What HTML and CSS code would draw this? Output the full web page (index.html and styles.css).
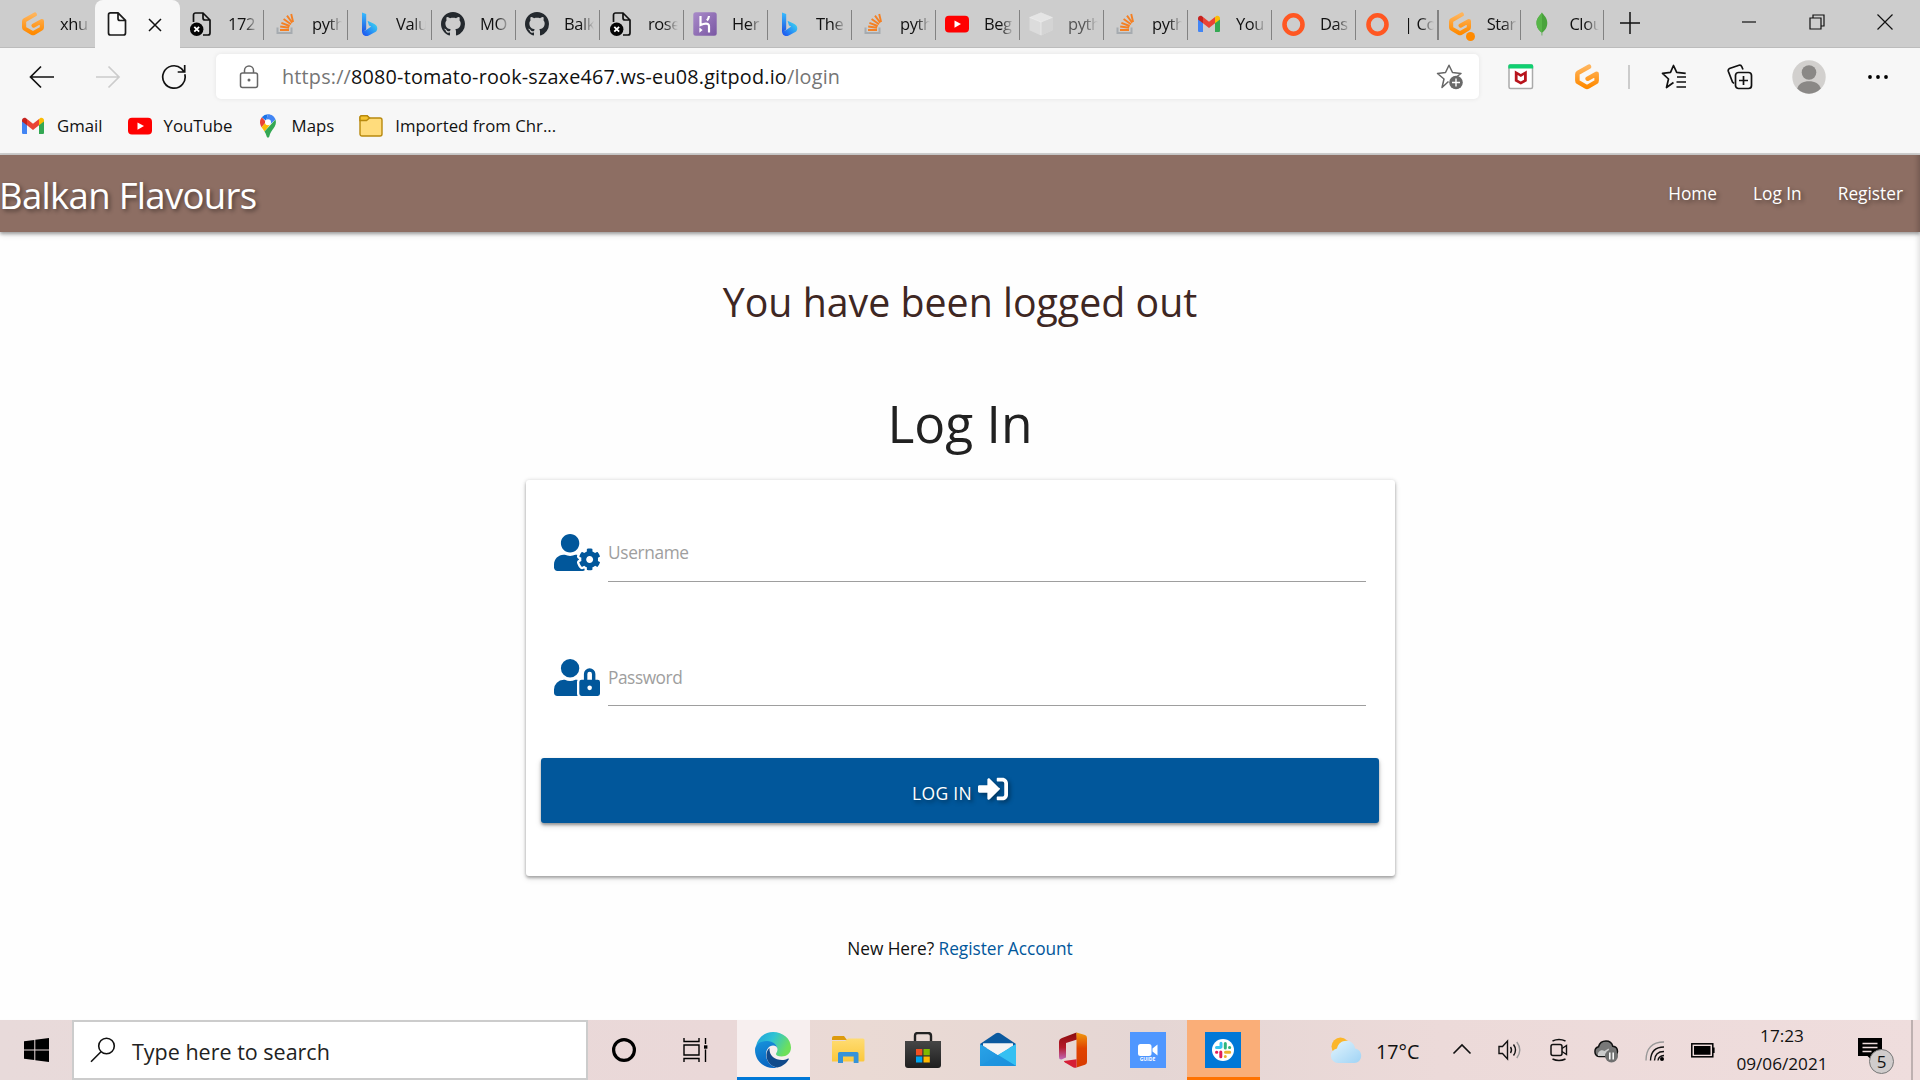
FILE: index.html
```html
<!DOCTYPE html>
<html lang="en">
<head>
<meta charset="utf-8">
<title>Balkan Flavours</title>
<link rel="stylesheet" href="styles.css">
</head>
<body>
<svg class="defs" width="0" height="0" aria-hidden="true">
  <defs>
    <linearGradient id="g-gitpod" x1="0" y1="0" x2="0" y2="1"><stop offset="0" stop-color="#ffb45b"/><stop offset="1" stop-color="#ff8a00"/></linearGradient>
    <linearGradient id="g-bing" x1="0" y1="0" x2="0" y2="1"><stop offset="0" stop-color="#37bdff"/><stop offset="1" stop-color="#2052e0"/></linearGradient>
    <linearGradient id="g-bing2" x1="0" y1="1" x2="1" y2="0"><stop offset="0" stop-color="#1b48ef"/><stop offset=".5" stop-color="#2a9bf5"/><stop offset="1" stop-color="#45e0ee"/></linearGradient>
    <linearGradient id="g-heroku" x1="0" y1="0" x2="1" y2="1"><stop offset="0" stop-color="#a98bc9"/><stop offset="1" stop-color="#7a57a3"/></linearGradient>
    <linearGradient id="g-edge-a" x1="0" y1="0" x2="1" y2=".4"><stop offset="0" stop-color="#1f9fdc"/><stop offset=".5" stop-color="#2fc3d4"/><stop offset="1" stop-color="#6ee05a"/></linearGradient>
    <linearGradient id="g-edge-b" x1="0" y1="0" x2=".3" y2="1"><stop offset="0" stop-color="#1794dc"/><stop offset="1" stop-color="#0a66c2"/></linearGradient>
    <linearGradient id="g-mail" x1="0" y1="0" x2="1" y2="1"><stop offset="0" stop-color="#2aa4e8"/><stop offset="1" stop-color="#1a8cd8"/></linearGradient>
    <linearGradient id="g-office" x1="0" y1="0" x2="0" y2="1"><stop offset="0" stop-color="#8a0d0d"/><stop offset=".55" stop-color="#b51a2a"/><stop offset="1" stop-color="#c06ab8"/></linearGradient>
    <linearGradient id="g-office2" x1="0" y1="0" x2="0" y2="1"><stop offset="0" stop-color="#f09a10"/><stop offset=".45" stop-color="#e04400"/><stop offset="1" stop-color="#d83b01"/></linearGradient>
    <linearGradient id="g-folder" x1="0" y1="0" x2="0" y2="1"><stop offset="0" stop-color="#ffdc73"/><stop offset="1" stop-color="#fbc83c"/></linearGradient>
    <linearGradient id="g-store" x1="0" y1="0" x2="0" y2="1"><stop offset="0" stop-color="#464646"/><stop offset="1" stop-color="#1f1f1f"/></linearGradient>
    <linearGradient id="g-cloud" x1="0" y1="0" x2="1" y2="1"><stop offset="0" stop-color="#e2f4fd"/><stop offset="1" stop-color="#9fd3f5"/></linearGradient>

    <symbol id="gitpod" viewBox="0 0 24 24"><path d="M13.800 2.500 3.900 8.100Q3.100 8.600 3.100 9.500V15.200Q3.100 16.200 3.900 16.700L11 20.900Q12 21.500 13 20.900L20.100 16.700Q20.900 16.200 20.900 15.200V9L12.600 13.600" fill="none" stroke="url(#g-gitpod)" stroke-width="4.200" stroke-linecap="round" stroke-linejoin="round"/></symbol>
    <symbol id="doc" viewBox="0 0 24 24"><path d="M5.500.900H13L20.500 8.400V21a2 2 0 0 1-2 2H5.500a2 2 0 0 1-2-2V2.900a2 2 0 0 1 2-2zM13 1v5.500a2 2 0 0 0 2 2h5.500" fill="#fbfbfb" stroke="#1b1b1b" stroke-width="1.700"/></symbol>
    <symbol id="doc-x" viewBox="0 0 24 24"><path d="M4.500 10V3a2 2 0 0 1 2-2H14l7 7v13a2 2 0 0 1-2 2h-5M14 1v5a2 2 0 0 0 2 2h5" fill="none" stroke="#111" stroke-width="1.700"/><circle cx="7.700" cy="17.200" r="6.700" fill="#050505"/><path d="m5.300 14.800 4.800 4.800m0-4.800-4.800 4.800" stroke="#fff" stroke-width="1.800"/></symbol>
    <symbol id="so" viewBox="0 0 24 24"><path d="M4.500 15.500v5.600h14v-5.600" fill="none" stroke="#a6abb0" stroke-width="2"/><path d="M7 18h9M7.200 14.500l8.900 1.200M8.400 10.800l8.300 3.200M10.600 7l7.400 5.200M14 3.600l5.200 7.200M18.200 2l1.900 8" stroke="#f48024" stroke-width="1.900"/></symbol>
    <symbol id="bing" viewBox="0 0 24 24"><path d="M5 .500 9.200 2v15.500L5 20.500z" fill="url(#g-bing)"/><path d="M5 19.500 9.200 18l5-3.500-2.200-1.100-1.500-4.600 6.500 3c4 2 4.200 6.300 1.300 8.300l-6.500 3.500c-2.300 1.100-6.500.6-6.800-4.100z" fill="url(#g-bing2)"/></symbol>
    <symbol id="github" viewBox="0 0 16 16"><path fill="#24292e" d="M8 0C3.580 0 0 3.580 0 8c0 3.540 2.290 6.530 5.470 7.590.4.070.55-.17.55-.38 0-.19-.01-.82-.01-1.490-2.010.37-2.530-.49-2.690-.94-.09-.23-.48-.94-.82-1.130-.28-.15-.68-.52-.01-.53.63-.01 1.080.58 1.230.82.72 1.210 1.870.87 2.330.66.070-.52.28-.87.51-1.070-1.780-.2-3.640-.89-3.640-3.950 0-.87.31-1.590.82-2.150-.08-.2-.36-1.020.080-2.120 0 0 .67-.21 2.200.82.640-.18 1.320-.27 2-.27s1.360.09 2 .27c1.530-1.040 2.200-.82 2.200-.82.440 1.100.16 1.920.080 2.120.51.56.82 1.270.82 2.150 0 3.070-1.870 3.750-3.650 3.950.29.25.54.73.54 1.480 0 1.070-.01 1.930-.01 2.200 0 .21.15.46.55.38A8.010 8.010 0 0 0 16 8c0-4.420-3.580-8-8-8z"/></symbol>
    <symbol id="heroku" viewBox="0 0 24 24"><rect x=".3" y=".3" width="23.400" height="23.400" rx="2.500" fill="url(#g-heroku)"/><path d="M7.500 4v9c3-1.300 8.500-2.800 8.500 1.200V20.500M16 4c-.2 1.800-1 3.300-2 4.500" fill="none" stroke="#fff" stroke-width="2.200"/><path d="m6.400 15.500 3.200 2.600-3.200 2.600z" fill="#fff"/></symbol>
    <symbol id="youtube" viewBox="0 0 24 24"><rect y="3.700" width="24" height="16.800" rx="4" fill="#f00"/><path d="m9.500 8.500 6.500 3.600-6.500 3.600z" fill="#fff"/></symbol>
    <symbol id="cube" viewBox="0 0 24 24"><path d="m12 .5 11.500 4.800v13L12 23.500.5 18.300v-13z" fill="#dcdcdc"/><path d="m12 .5 11.500 4.800L12 10 .5 5.300z" fill="#e5e5e5"/><path d="M12 10v13.500l11.500-5.200v-13z" fill="#d4d4d4"/><path d="M.5 5.300 12 10l11.500-4.700M12 10v13" fill="none" stroke="#eee" stroke-width=".7"/></symbol>
    <symbol id="gmail" viewBox="0 0 24 24"><path d="M1 6.500v12.300c0 .8.600 1.300 1.300 1.300H6V10z" fill="#4285f4"/><path d="M18 10v10.100h3.700c.8 0 1.300-.6 1.300-1.300V6.500z" fill="#34a853"/><path d="m6 5 6 4.700L18 5v6.200L12 16l-6-4.800z" fill="#ea4335"/><path d="M1 6.500C1 4 3.500 3.200 5 4.200l1 .8v6.200L1 7.600z" fill="#c5221f"/><path d="M18 5l1-.8c1.600-1 4-.2 4 2.300v1.100l-5 3.600z" fill="#fbbc04"/></symbol>
    <symbol id="ring" viewBox="0 0 24 24"><ellipse cx="12.500" cy="12.500" rx="9" ry="9.200" fill="none" stroke="#ff5722" stroke-width="4.600"/></symbol>
    <symbol id="leaf" viewBox="0 0 24 24"><path d="M12 .5c1.300 2.300 5.300 5 5.300 10.500 0 4.500-2.300 7.500-5 9.500v3h-.7v-3C9 18.500 6.500 15.500 6.500 11 6.500 5.500 10.700 3 12 .500z" fill="#49a33c"/><path d="M12 .5v20c-3-2-5.500-5-5.500-9.500C6.500 5.500 10.700 3 12 .500z" fill="#57b548"/></symbol>
  </defs>
</svg>

<div class="browser">
  <header class="tabs">
    <div class="tab tab-first"><svg class="fav"><use href="#gitpod"/></svg><span class="tab-name">xhu</span></div>
    <div class="tab tab-active"><svg class="fav"><use href="#doc"/></svg><svg class="tab-close" viewBox="0 0 14 14"><path d="m1 1 12 12M13 1 1 13" stroke="#111" stroke-width="1.500"/></svg></div>
    <div class="tab"><svg class="fav"><use href="#doc-x"/></svg><span class="tab-name">172</span></div>
    <div class="tab"><svg class="fav"><use href="#so"/></svg><span class="tab-name">pyth</span></div>
    <div class="tab"><svg class="fav"><use href="#bing"/></svg><span class="tab-name">Valu</span></div>
    <div class="tab"><svg class="fav"><use href="#github"/></svg><span class="tab-name">MO</span></div>
    <div class="tab"><svg class="fav"><use href="#github"/></svg><span class="tab-name">Balk</span></div>
    <div class="tab"><svg class="fav"><use href="#doc-x"/></svg><span class="tab-name">rose</span></div>
    <div class="tab"><svg class="fav"><use href="#heroku"/></svg><span class="tab-name">Her</span></div>
    <div class="tab"><svg class="fav"><use href="#bing"/></svg><span class="tab-name">The</span></div>
    <div class="tab"><svg class="fav"><use href="#so"/></svg><span class="tab-name">pyth</span></div>
    <div class="tab"><svg class="fav"><use href="#youtube"/></svg><span class="tab-name">Beg</span></div>
    <div class="tab tab-sleeping"><svg class="fav"><use href="#cube"/></svg><span class="tab-name">pyth</span></div>
    <div class="tab"><svg class="fav"><use href="#so"/></svg><span class="tab-name">pyth</span></div>
    <div class="tab"><svg class="fav"><use href="#gmail"/></svg><span class="tab-name">You</span></div>
    <div class="tab"><svg class="fav"><use href="#ring"/></svg><span class="tab-name">Das</span></div>
    <div class="tab tab-narrow"><svg class="fav"><use href="#ring"/></svg><span class="tab-name">| Co</span></div>
    <div class="tab tab-narrow tab-notify"><svg class="fav"><use href="#gitpod"/></svg><i class="dot"></i><span class="tab-name">Star</span></div>
    <div class="tab tab-narrow"><svg class="fav"><use href="#leaf"/></svg><span class="tab-name">Clou</span></div>
    <svg class="new-tab" viewBox="0 0 22 24"><path d="M1 12h20M11 1v22" stroke="#111" stroke-width="1.500"/></svg>
    <div class="win-controls">
      <svg width="16" height="16" viewBox="0 0 16 16"><path d="M1 8h14" stroke="#111" stroke-width="1.200"/></svg>
      <svg width="16" height="16" viewBox="0 0 16 16"><path d="M1 4h11v11H1zM4 4V1h11v11h-3" fill="none" stroke="#111" stroke-width="1.200"/></svg>
      <svg width="16" height="16" viewBox="0 0 16 16"><path d="m.5.500 15 15m0-15-15 15" stroke="#111" stroke-width="1.200"/></svg>
    </div>
  </header>

  <div class="toolbar">
    <div class="nav-buttons">
      <svg width="26" height="24" viewBox="0 0 26 24"><path d="M12 1.500 1.500 12 12 22.500M1.500 12H25" fill="none" stroke="#111" stroke-width="1.700"/></svg>
      <svg width="26" height="24" viewBox="0 0 26 24"><path d="M13.500 1.500 24 12 13.500 22.500M24 12H1" fill="none" stroke="#ccc" stroke-width="1.700"/></svg>
      <svg width="26" height="26" viewBox="0 0 26 26"><path d="M23.800 10.200A11.200 11.200 0 1 1 20.500 4.700L23 7.700M23.700 1v7h-7" fill="none" stroke="#111" stroke-width="1.700"/></svg>
    </div>
    <div class="address">
      <svg class="lock" width="20" height="24" viewBox="0 0 20 24"><rect x="1.500" y="8" width="17" height="14.500" rx="2" fill="none" stroke="#666" stroke-width="1.500"/><path d="M5.500 8V5.500a4.500 4.500 0 0 1 9 0V8" fill="none" stroke="#666" stroke-width="1.500"/><circle cx="10" cy="15" r="1.500" fill="#666"/></svg>
      <span class="url"><span>https://</span><b>8080-tomato-rook-szaxe467.ws-eu08.gitpod.io</b><span>/login</span></span>
      <svg class="fav-add" width="28" height="26" viewBox="0 0 28 26"><path d="M12.500 17.500 6 23.500 8 15 1.500 9.500l8-1L13 1.200l3.500 7.300 8.500 1-4 3" fill="none" stroke="#666" stroke-width="1.500" stroke-linejoin="round"/><circle cx="20" cy="18.500" r="6.800" fill="#696969"/><path d="M16 18.500h8m-4-4v8" stroke="#fff" stroke-width="1.400"/></svg>
    </div>
    <div class="actions">
      <svg width="26" height="26" viewBox="0 0 26 26"><rect x="1" y="1" width="23.500" height="23.500" rx="1.500" fill="#fff" stroke="#aaa" stroke-width="1.500"/><path d="M.3 4.500V2Q.3.300 2 .300h21.500Q25.200.300 25.200 2v2.500z" fill="#10d070"/><path d="m6.800 6.500 6 3.600 6-3.600v10.800l-6 3.200-6-3.200zm2.800 4.600v4.600l3.200 1.700 3.200-1.700v-4.600l-3.200 2z" fill="#b8141c" fill-rule="evenodd"/></svg>
      <svg width="26" height="26"><use href="#gitpod"/></svg>
      <i class="rule"></i>
      <svg width="26" height="26" viewBox="0 0 26 26"><path d="M12.500 18.500 5.500 23.500 7.500 15 1.500 9.300l8-1L12.500 1.500l3.200 6.800 9 1M16 13h9M15.500 18H25M15.500 23H25" fill="none" stroke="#111" stroke-width="1.700" stroke-linejoin="round"/></svg>
      <svg width="26" height="26" viewBox="0 0 26 26"><rect x="8.500" y="8.500" width="16" height="16" rx="3" fill="none" stroke="#111" stroke-width="1.700"/><path d="M16.500 12v9m-4.500-4.500h9M7 19.500 5.500 18 1.300 7.200Q.8 5.500 2.500 4.500L12 1.300q2-.5 2.700 1.200L16 5.500" fill="none" stroke="#111" stroke-width="1.700"/></svg>
      <svg width="34" height="34" viewBox="0 0 34 34"><circle cx="17" cy="17" r="16.700" fill="#d2d0ce"/><circle cx="17" cy="12.500" r="7.300" fill="#8a8886"/><path d="M5.200 28.500C7 23.500 11 21.300 17 21.300s10 2.200 11.800 7.200A16.600 16.600 0 0 1 17 33.700a16.600 16.600 0 0 1-11.800-5.200z" fill="#8a8886"/></svg>
      <svg width="22" height="6" viewBox="0 0 22 6"><circle cx="3" cy="3" r="1.900"/><circle cx="11" cy="3" r="1.900"/><circle cx="19" cy="3" r="1.900"/></svg>
    </div>
  </div>

  <nav class="bookmarks">
    <span class="bookmark"><svg><use href="#gmail"/></svg>Gmail</span>
    <span class="bookmark"><svg><use href="#youtube"/></svg>YouTube</span>
    <span class="bookmark"><svg viewBox="0 0 24 24"><path d="M12 .3a8 8 0 0 0-6.200 2.900L10 6.700z" fill="#1a73e8"/><path d="M5.800 3.200A8 8 0 0 0 4 8.300c0 1.900.7 3.400 1.600 5L10 8z" fill="#ea4335"/><path d="M12 .3c3.500 0 6.500 2.200 7.500 5.300L14.500 10 10 6.500z" fill="#4285f4"/><path d="M5.600 13.300c.9 1.500 2 2.700 2.900 4.200l6-7.500L10 8z" fill="#fbbc04"/><path d="M19.500 5.600c1.300 4.500-.7 7.300-3 10.200-1.800 2.300-2.500 4-3.100 6.500-.4 1.800-2.400 1.800-2.800 0-.5-1.900-1.100-3.400-2.100-4.800z" fill="#34a853"/><circle cx="12" cy="8.200" r="3" fill="#fff"/></svg>Maps</span>
    <span class="bookmark"><svg viewBox="0 0 24 24"><path d="M1 3.500A1.800 1.800 0 0 1 2.800 1.700H8L10.500 4H21a2 2 0 0 1 2 2v14a2 2 0 0 1-2 2H3a2 2 0 0 1-2-2z" fill="#ffdc7c" stroke="#b8890e" stroke-width="1.400"/><path d="M1 6.500h6.500L10.500 4 8 1.700H2.800A1.800 1.800 0 0 0 1 3.500z" fill="#f5c431" stroke="#b8890e" stroke-width="1.400"/></svg>Imported from Chr...</span>
  </nav>
</div>

<div class="page">
  <nav class="site-nav">
    <a class="brand">Balkan Flavours</a>
    <div class="site-links"><a>Home</a><a>Log In</a><a>Register</a></div>
  </nav>
  <main>
    <h4 class="flash">You have been logged out</h4>
    <h3 class="title">Log In</h3>
    <form class="card">
      <div class="field">
        <svg viewBox="0 0 640 512"><path d="M610.500 373.300c2.600-14.100 2.600-28.500 0-42.600l25.800-14.900c3-1.700 4.300-5.200 3.300-8.500-6.700-21.600-18.200-41.200-33.200-57.400-2.300-2.500-6-3.100-9-1.400l-25.800 14.900c-10.900-9.300-23.400-16.500-36.900-21.300v-29.800c0-3.400-2.400-6.400-5.700-7.100-22.300-5-45-4.800-66.200 0-3.300.7-5.700 3.700-5.700 7.100v29.800c-13.500 4.800-26 12-36.900 21.300l-25.800-14.900c-2.900-1.700-6.700-1.100-9 1.400-15 16.200-26.500 35.800-33.200 57.400-1 3.300.4 6.800 3.300 8.500l25.800 14.900c-2.600 14.100-2.600 28.500 0 42.600l-25.800 14.900c-3 1.700-4.300 5.200-3.300 8.500 6.700 21.600 18.200 41.100 33.200 57.400 2.300 2.500 6 3.100 9 1.400l25.800-14.900c10.900 9.300 23.400 16.500 36.900 21.300v29.800c0 3.400 2.400 6.400 5.700 7.100 22.300 5 45 4.800 66.200 0 3.300-.7 5.700-3.700 5.700-7.100v-29.800c13.500-4.800 26-12 36.900-21.300l25.800 14.900c2.900 1.700 6.700 1.100 9-1.400 15-16.200 26.500-35.800 33.200-57.400 1-3.300-.4-6.800-3.300-8.500l-25.800-14.900zM496 400.500c-26.800 0-48.500-21.800-48.500-48.500s21.800-48.500 48.500-48.500 48.500 21.800 48.500 48.500-21.700 48.500-48.500 48.500zM224 256c70.700 0 128-57.300 128-128S294.700 0 224 0 96 57.300 96 128s57.300 128 128 128zm201.200 226.500c-2.300-1.200-4.600-2.600-6.800-3.900l-7.900 4.600c-6 3.400-12.800 5.300-19.600 5.300-10.900 0-21.400-4.600-28.900-12.600-18.300-19.800-32.300-43.900-40.200-69.600-5.500-17.700 1.900-36.400 17.900-45.700l7.900-4.600c-.1-2.600-.1-5.200 0-7.800l-7.900-4.600c-16-9.200-23.400-28-17.900-45.700.9-2.900 2.200-5.800 3.200-8.700-3.800-.3-7.500-1.200-11.400-1.200h-16.700c-22.200 10.200-46.900 16-72.900 16s-50.600-5.800-72.900-16h-16.700C60.200 288 0 348.200 0 422.400V464c0 26.500 21.500 48 48 48h352c10.100 0 19.500-3.200 27.200-8.500-1.200-3.800-2-7.700-2-11.800v-9.200z"/></svg>
        <label>Username</label>
      </div>
      <div class="field">
        <svg class="icon-password" viewBox="0 0 640 512"><path d="M224 256A128 128 0 1 0 96 128a128 128 0 0 0 128 128zm96 64a63.080 63.080 0 0 1 8.100-30.500c-4.800-.5-9.500-1.500-14.500-1.500h-16.700a174.080 174.080 0 0 1-145.800 0h-16.700A134.430 134.430 0 0 0 0 422.400V464a48 48 0 0 0 48 48h280.900a63.540 63.540 0 0 1-8.900-32zm288-32h-32v-80a80 80 0 0 0-160 0v80h-32a32 32 0 0 0-32 32v160a32 32 0 0 0 32 32h224a32 32 0 0 0 32-32V320a32 32 0 0 0-32-32zM496 432a32 32 0 1 1 32-32 32 32 0 0 1-32 32zm32-144h-64v-80a32 32 0 0 1 64 0z"/></svg>
        <label class="label-password">Password</label>
      </div>
      <button class="submit" type="button"><span>LOG IN</span><svg viewBox="0 0 512 512"><path d="M416 448h-84c-6.600 0-12-5.400-12-12v-40c0-6.600 5.400-12 12-12h84c17.700 0 32-14.300 32-32V160c0-17.700-14.300-32-32-32h-84c-6.600 0-12-5.400-12-12V76c0-6.600 5.400-12 12-12h84c53 0 96 43 96 96v192c0 53-43 96-96 96zm-47-201L201 79c-15-15-41-4.500-41 17v96H24c-13.300 0-24 10.700-24 24v80c0 13.300 10.700 24 24 24h136v96c0 21.500 26 32 41 17l168-168c9.300-9.400 9.300-24.600 0-34z"/></svg></button>
    </form>
    <p class="register">New Here? <a>Register Account</a></p>
  </main>
</div>

<footer class="taskbar">
  <div class="start"><svg width="25" height="24" viewBox="0 0 25 24"><path d="M0 3.300 10.300 1.900v9.600H0zM11.300 1.700 25 0v11.500H11.300zM0 12.500h10.300v9.600L0 20.700zM11.300 12.500H25V24l-13.700-1.700z"/></svg></div>
  <div class="search"><svg width="26" height="26" viewBox="0 0 26 26"><circle cx="16.500" cy="9" r="7.800" fill="none" stroke="#111" stroke-width="1.600"/><path d="M11 14.800 1 24.800" stroke="#111" stroke-width="1.600"/></svg><span>Type here to search</span></div>
  <div class="cell cell-cortana"><svg width="26" height="26" viewBox="0 0 26 26"><circle cx="13" cy="13" r="10.400" fill="none" stroke="#000" stroke-width="3.200"/></svg></div>
  <div class="cell cell-view"><svg width="26" height="24" viewBox="0 0 26 24"><path d="M1 0v3.500h15V0M1 7h15v10H1zM1 24v-3.500h15V24M22.500 0v6M22.500 11.500V24" fill="none" stroke="#000" stroke-width="1.400"/><path d="M21 7.300h3.400v3.400H21z"/></svg></div>
  <div class="cell cell-active"><svg width="36" height="36" viewBox="0 0 36 36"><path d="M1 14C3 5.500 10 0 18 0c10 0 18 7 18 15.500 0 6-4.500 9-9.500 9-3.500 0-5.500-1.200-5.500-2.500 0-1 1.500-2 1.500-4.500 0-4.500-4.500-7.500-9.500-7.500-6 0-10 2-12 4z" fill="url(#g-edge-a)"/><path d="M0 18C0 12 5.500 9 12 9c6 0 10.500 4 10.500 8.500 0-2.500-2-4-4.500-4-4 0-7 4-7 9 0 6 4.500 12 11 13-1.500.4-2.500.5-4 .5C8 36 0 28 0 18z" fill="url(#g-edge-b)"/><path d="M14.500 16c-1.800 1.600-3.100 4-3.100 7 0 6.500 5 12 11 12.500 5-1 9-4.200 11.400-8.300.3-.6-.3-1-.8-.7-2 1.100-4 1.500-6 1.500-7 0-13-4-12.500-12z" fill="#114a8b"/></svg></div>
  <div class="cell"><svg width="34" height="28" viewBox="0 0 34 28"><path d="M1 2Q1 0 3 0h10l3 4H1z" fill="#dd9a0c"/><path d="M1 5h13l3-2.500h15q1.500 0 1.500 1.500v20q0 1.500-1.500 1.500H1z" fill="url(#g-folder)"/><path d="M7 27V17.500q0-1.500 1.500-1.500H26q1.500 0 1.500 1.500V27h-4.800v-6.500H12V27z" fill="#3693d8"/></svg></div>
  <div class="cell"><svg width="36" height="36" viewBox="0 0 36 36"><path d="M10 10V4q0-3 3-3h10q3 0 3 3v6" fill="none" stroke="#222" stroke-width="2.400"/><path d="M0 9h36v24q0 3-3 3H3q-3 0-3-3z" fill="url(#g-store)"/><path d="M11 17h6.300v6.300H11z" fill="#f25022"/><path d="M18.500 17h6.300v6.300h-6.300z" fill="#7fba00"/><path d="M11 24.500h6.300v6H11z" fill="#00a4ef"/><path d="M18.500 24.500h6.300v6h-6.300z" fill="#ffb900"/></svg></div>
  <div class="cell"><svg width="36" height="36" viewBox="0 0 36 36"><path d="M0 12 16 1.300q2-1.300 4 0L36 12v4H0z" fill="#0b5a9f"/><path d="M3 11.500h30L18 25z" fill="#f4f4f4"/><path d="M0 12l18 11L36 12v22H0z" fill="url(#g-mail)"/><path d="M3 11.500h30v2.200L18 23 3 13.700z" fill="#f4f4f4"/><path d="M18 23 36 12v22z" fill="#35c0f2"/><path d="m18 23 18 11H0z" fill="#1d94de" opacity=".65"/></svg></div>
  <div class="cell"><svg width="30" height="36" viewBox="0 0 30 36"><path d="M18.500.500 4 6Q1 7.200 1 10v15q0 3 2.600 2.500L8 25.500V11l11-3.500z" fill="url(#g-office)"/><path d="M18.500.500 27 3q2 .6 2 3v24q0 2-2 2.700L18.500 35.500z" fill="url(#g-office2)"/><path d="m6 29 12.500-1.800v8.300q-1 .4-3 0L7 30.500q-1.200-.8-1-1.500z" fill="#d51f37"/></svg></div>
  <div class="cell"><div class="zoom-tile"><svg width="20" height="12" viewBox="0 0 20 12"><rect width="13.500" height="12" rx="2.500" fill="#fff"/><path d="m14.500 4.500 5-4v11l-5-4z" fill="#fff"/></svg><span>GUIDE</span></div></div>
  <div class="cell cell-slack"><svg width="36" height="36" viewBox="0 0 36 36"><path d="M0 0h36v36H0z" fill="#0078d7"/><circle cx="18" cy="18" r="11" fill="#fff"/><g stroke-width="3" stroke-linecap="round"><path d="M16 11.300V15M11.500 15.500H15" stroke="#36c5f0"/><path d="M20.300 11.500V16M24.700 15.500h-.2" stroke="#2eb67d"/><path d="M20.500 20.300h4.200M20.300 24.600v-.2" stroke="#ecb22e"/><path d="M15.800 20v4.700M11.500 20.300h.3" stroke="#e01e5a"/></g></svg></div>
  <div class="tray">
    <svg class="t-weather" width="32" height="28" viewBox="0 0 32 28"><circle cx="10.500" cy="10.500" r="9" fill="#fbb62a"/><path d="M8 27a7.300 7.300 0 0 1-1-14.500C8 7.500 12 4.800 16.500 4.800c4.500 0 8 3.200 8.500 7.700 3.500.4 6.200 3.300 6.200 7 0 4.500-3 7.500-7 7.500z" fill="url(#g-cloud)"/></svg>
    <span class="temp">17°C</span>
    <svg class="t-chev" width="20" height="12" viewBox="0 0 20 12"><path d="m1.500 10.500 8.500-8.500 8.500 8.500" fill="none" stroke="#111" stroke-width="1.600"/></svg>
    <svg class="t-vol" width="24" height="22" viewBox="0 0 24 22"><path d="M1 7.500h3.500L9.500 2v18l-5-5.500H1zM12.500 8q2 3 0 6M15.500 5.500q4 5.500 0 11" fill="none" stroke="#111" stroke-width="1.400"/><path d="M18.800 3q6 8 0 16" fill="none" stroke="#999" stroke-width="1.400"/></svg>
    <svg class="t-meet" width="18" height="24" viewBox="0 0 18 24"><rect x="1" y="6.500" width="11" height="11" rx="2" fill="none" stroke="#111" stroke-width="1.500"/><path d="M12 10.500 16.500 7.500v9L12 13.500M2.500 3q6.500-3 13 0M2.500 21q6.500 3 13 0" fill="none" stroke="#111" stroke-width="1.400"/></svg>
    <svg class="t-cloud" width="26" height="23" viewBox="0 0 26 23"><path d="M6 16.500a5 5 0 0 1-.5-9.700C6.500 3 9.500 1 13 1c3.500 0 6 2.200 6.800 5.200 3 .3 4.700 2.500 4.700 5.300 0 3-2.500 5-5.500 5z" fill="#787878" stroke="#111" stroke-width="1.500"/><path d="M5 16c-1-4 3-7 6.500-5l4-2.500L19 16z" fill="#ccc"/><circle cx="18.500" cy="16" r="6.500" fill="#707070"/><path d="M16.800 12.500v7m3.400-7v7" stroke="#fff" stroke-width="1.500"/></svg>
    <svg class="t-wifi" width="20" height="22" viewBox="0 0 20 22"><path d="M1 20.500Q1 2 19 2" fill="none" stroke="#999" stroke-width="1.400"/><path d="M5.500 20.500Q6 7 19 7M9.500 20.500Q10 11.500 19 11.500M13 20.500Q13.500 16 19 15.500" fill="none" stroke="#111" stroke-width="1.400"/><circle cx="17" cy="19" r="2"/></svg>
    <svg class="t-bat" width="24" height="15" viewBox="0 0 24 15"><rect x=".8" y=".8" width="21" height="13" fill="none" stroke="#000" stroke-width="1.500"/><path d="M3 3h16.500v8.700H3zM22 4.500h1.600v5.500H22z"/></svg>
    <div class="clock"><span>17:23</span><span>09/06/2021</span></div>
    <div class="notify"><svg width="24" height="24" viewBox="0 0 24 24"><path d="M0 0h24v18h-9v5.500L9.500 18H0z"/><path d="M4.500 5.500h15M4.500 9.500h15M4.500 13.500h9" stroke="#eddcdc" stroke-width="1.400"/></svg><span class="badge">5</span></div>
    <i class="peek"></i>
  </div>
</footer>
</body>
</html>
```
FILE: styles.css
```css
* { box-sizing: border-box; }

body {
  margin: 0;
  width: 1920px;
  height: 1080px;
  overflow: hidden;
  display: flex;
  flex-direction: column;
  background: #fefefe;
  color: #111;
  font-family: "Open Sans", "Noto Sans", sans-serif;
}

svg { display: block; flex: none; }
.defs { position: absolute; }

/* Browser window */
.browser {
  height: 155px;
  background: #f7f7f7;
  border-bottom: 2px solid #cdcdcd;
}

.tabs {
  display: flex;
  height: 48px;
  background: #cdcdcd;
  box-shadow: inset 0 -1px 0 #bcbcbc;
}

.tab {
  position: relative;
  display: flex;
  align-items: center;
  width: 84px;
  padding-left: 9px;
  flex: none;
}

.tab::after {
  content: "";
  position: absolute;
  right: 0;
  top: 10px;
  width: 1.500px;
  height: 30px;
  background: #828282;
}

.tab-first::after, .tab-active::after { display: none; }
.tab-first { width: 95px; padding-left: 21px; }

.tab-active {
  width: 85px;
  padding-left: 10px;
  background: #f7f7f7;
  border-radius: 8px 8px 0 0;
}

.tab-narrow { width: 82.700px; }
.fav { width: 24px; height: 24px; }

.tab-name {
  width: 30px;
  margin-left: 15px;
  overflow: hidden;
  white-space: nowrap;
  font-size: 16.500px;
  letter-spacing: -.4px;
  line-height: 24px;
  -webkit-mask-image: linear-gradient(90deg, #000 55%, transparent);
  mask-image: linear-gradient(90deg, #000 55%, transparent);
}

.tab-sleeping .tab-name { color: #555; }
.tab-close { width: 14px; height: 14px; margin-left: 19px; margin-top: 2px; }

.dot {
  position: absolute;
  left: 27px;
  top: 32px;
  width: 9px;
  height: 9px;
  border-radius: 50%;
  background: #ff8a00;
}

.new-tab { width: 22px; height: 24px; margin: 11px 0 0 15px; }

.win-controls {
  display: flex;
  gap: 52px;
  margin: 14px 27px 0 auto;
}

.toolbar { display: flex; height: 57px; align-items: center; }

.nav-buttons {
  display: flex;
  align-items: center;
  gap: 40px;
  width: 216px;
  padding-left: 29px;
}

.address {
  display: flex;
  align-items: center;
  width: 1263px;
  height: 45px;
  padding: 0 15px 0 23px;
  background: #fff;
  border-radius: 5px;
  box-shadow: 0 0 5px rgba(0, 0, 0, .08);
}

.url {
  margin-left: 23px;
  color: #757575;
  font-size: 19.800px;
  letter-spacing: .2px;
}

.url b { font-weight: 400; color: #111; }
.fav-add { margin-left: auto; }

.actions {
  display: flex;
  align-items: center;
  flex: 1;
  padding-left: 29px;
}

.actions > :nth-child(2) { margin-left: 40px; }
.actions > :nth-child(4) { margin-left: 31px; }
.actions > :nth-child(5) { margin-left: 40px; }
.actions > :nth-child(6) { margin-left: 39px; }
.actions > :nth-child(7) { margin-left: 41px; }
.rule { width: 2px; height: 24px; margin-left: 28px; background: #ccc; }

.bookmarks {
  display: flex;
  gap: 25px;
  height: 41px;
  padding-left: 21px;
  align-items: center;
}

.bookmark { display: flex; align-items: center; font-size: 16.800px; gap: 12px; line-height: 24px; }
.bookmark svg { width: 24px; height: 24px; }
.bookmark:nth-child(3) { margin-left: -2px; }

/* Web page */
.page {
  flex: 1;
  box-shadow: inset -6px 0 5px -4px rgba(0, 0, 0, .12);
}

.site-nav {
  display: flex;
  justify-content: space-between;
  height: 77px;
  padding-right: 17px;
  background: #8d6e63;
  color: #fff;
  box-shadow: 0 2px 3px rgba(0, 0, 0, .3), 0 3px 6px rgba(0, 0, 0, .12), inset -6px 0 5px -4px rgba(0, 0, 0, .2);
  text-shadow: 2px 2px 4px rgba(0, 0, 0, .45);
}

.brand {
  margin-left: -1px;
  font-size: 36.500px;
  letter-spacing: -.680px;
  line-height: 80px;
}

.site-links {
  display: flex;
  gap: 36px;
  font-size: 17.300px;
  line-height: 77px;
}

main { display: flex; flex-direction: column; align-items: center; }

.flash {
  margin: 40px 0 0;
  color: #3e2723;
  font-size: 39.300px;
  font-weight: 400;
  line-height: 60px;
}

.title {
  margin: 51px 0 0;
  color: #212121;
  font-size: 51.500px;
  font-weight: 400;
  line-height: 80px;
}

.card {
  width: 869px;
  height: 396px;
  margin-top: 17px;
  padding: 48px 15px 0;
  background: #fff;
  border-radius: 3px;
  box-shadow: 0 2px 3px rgba(0, 0, 0, .26), 0 3px 6px rgba(0, 0, 0, .1), 0 0 4px rgba(0, 0, 0, .12);
}

.field { display: flex; height: 54px; padding: 0 14px 0 13px; }
.field + .field { margin-top: 70px; }
.field svg { width: 46px; height: 37px; margin-top: 6px; fill: #01579b; }
.field .icon-password { margin-top: 7px; }

.field label {
  flex: 1;
  margin-left: 8px;
  border-bottom: 1px solid #9e9e9e;
  color: #9e9e9e;
  font-size: 17.300px;
  letter-spacing: -.35px;
  line-height: 50px;
  text-indent: .5px;
}

.field .label-password { line-height: 52px; letter-spacing: -.45px; }

.submit {
  display: flex;
  justify-content: center;
  width: 838px;
  height: 65px;
  margin: 52px 0 0;
  padding: 0 0 0 1px;
  border: 0;
  border-radius: 3px;
  background: #01579b;
  color: #fff;
  font: 17.500px/70px "Open Sans", "Noto Sans", sans-serif;
  letter-spacing: .3px;
  text-shadow: 2px 2px 4px rgba(0, 0, 0, .5);
  box-shadow: 0 2px 3px rgba(0, 0, 0, .35), 0 3px 6px rgba(0, 0, 0, .14);
}

.submit svg {
  width: 30px;
  height: 30px;
  margin: 16px 0 0 6px;
  fill: #fff;
  filter: drop-shadow(2px 2px 2px rgba(0, 0, 0, .4));
}

.register {
  margin: 58px 0 0;
  font-size: 17.300px;
  letter-spacing: -.05px;
  line-height: 30px;
}

.register a { color: #01579b; }

/* Taskbar */
.taskbar {
  display: flex;
  height: 60px;
  background: linear-gradient(90deg, #e8dada 0, #ead8d8 38%, #eadad4 45%, #e5d6d4 60%, #ecdad9 75%, #efdddd 100%);
}

.start { width: 72px; padding: 18px 0 0 24px; }

.search {
  display: flex;
  align-items: center;
  width: 516px;
  padding-left: 16px;
  background: #fff;
  border: 2px solid #ccc;
  font-size: 21.500px;
  color: #222;
}

.search span { margin: 2px 0 0 16px; }

.cell {
  display: flex;
  align-items: center;
  justify-content: center;
  width: 73px;
  padding-right: 2px;
  margin-right: 2px;
}

.cell-view { margin-right: 4px; }
.cell-cortana { width: 72px; margin-right: 0; padding-right: 0; }
.cell-active { background: #f7efef; box-shadow: inset 0 -3px #0078d7; }
.cell-slack { background: #faae78; box-shadow: inset 0 -3px #ff7200; margin-right: 0; }

.zoom-tile {
  display: flex;
  flex-direction: column;
  align-items: center;
  width: 36px;
  height: 36px;
  padding-top: 12px;
  background: #4f97ff;
  color: #fff;
  font: 700 5px/6px "Open Sans", sans-serif;
}

.tray { display: flex; flex: 1; align-items: center; padding-left: 70px; }
.temp { width: 45px; margin-left: 14px; font-size: 19.700px; margin-top: 2px; }
.t-chev { margin-left: 31px; margin-top: -2px; }
.t-vol { margin-left: 26px; }
.t-meet { margin-left: 28px; }
.t-cloud { margin-left: 25px; margin-top: 2px; }
.t-wifi { margin-left: 26px; margin-top: 2px; }
.t-bat { margin-left: 26px; }

.clock {
  display: flex;
  flex-direction: column;
  align-items: center;
  width: 94px;
  margin-left: 20px;
  font-size: 17.200px;
  line-height: 28px;
}

.notify { position: relative; margin-left: 29px; }

.badge {
  position: absolute;
  left: 11px;
  top: 11px;
  width: 25px;
  height: 25px;
  border: 1px solid #777;
  border-radius: 50%;
  background: #d0cccc;
  font-size: 17px;
  line-height: 23px;
  text-align: center;
}

.peek { width: 2px; height: 60px; margin: 0 7px 0 auto; background: #bdb0b0; }
```
